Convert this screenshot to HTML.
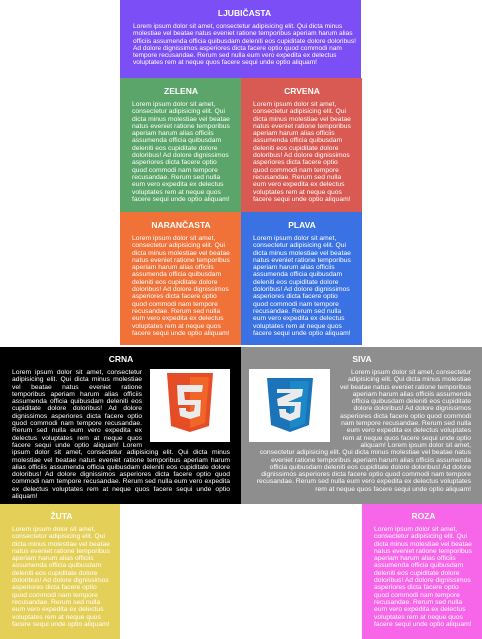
<!DOCTYPE html>
<html><head><meta charset="utf-8"><style>
*{margin:0;padding:0;box-sizing:border-box}
body{width:482px;height:639px;position:relative;background:#fff;font-family:"Liberation Sans",Arial,sans-serif;overflow:hidden}
.b{position:absolute;color:#fff;padding:7px 11px 0 12px;font-size:6.75px;line-height:7.3px}
.b h2{font-size:8.5px;line-height:10px;text-align:center;font-weight:bold;margin-bottom:5px}
.b p{margin:0}
.img{background:#fff;width:81px;height:73px;display:flex;align-items:center;justify-content:center}
</style></head><body>
<div class="b" style="left:120px;top:0;width:241px;height:78px;background:#7b4ff5;padding:8px 5px 0 13px;font-size:6.6px"><h2>LJUBIČASTA</h2><p>Lorem ipsum dolor sit amet, consectetur adipisicing elit. Qui dicta minus molestiae vel beatae natus eveniet ratione temporibus aperiam harum alias officiis assumenda officia quibusdam deleniti eos cupiditate dolore doloribus! Ad dolore dignissimos asperiores dicta facere optio quod commodi nam tempore recusandae. Rerum sed nulla eum vero expedita ex delectus voluptates rem at neque quos facere sequi unde optio aliquam!</p></div>
<div class="b" style="left:120px;top:78px;width:121px;height:134px;background:#5ba56a;padding-top:8px"><h2>ZELENA</h2><p>Lorem ipsum dolor sit amet, consectetur adipisicing elit. Qui dicta minus molestiae vel beatae natus eveniet ratione temporibus aperiam harum alias officiis assumenda officia quibusdam deleniti eos cupiditate dolore doloribus! Ad dolore dignissimos asperiores dicta facere optio quod commodi nam tempore recusandae. Rerum sed nulla eum vero expedita ex delectus voluptates rem at neque quos facere sequi unde optio aliquam!</p></div>
<div class="b" style="left:241px;top:78px;width:121px;height:134px;background:#d95a52;padding-top:8px"><h2>CRVENA</h2><p>Lorem ipsum dolor sit amet, consectetur adipisicing elit. Qui dicta minus molestiae vel beatae natus eveniet ratione temporibus aperiam harum alias officiis assumenda officia quibusdam deleniti eos cupiditate dolore doloribus! Ad dolore dignissimos asperiores dicta facere optio quod commodi nam tempore recusandae. Rerum sed nulla eum vero expedita ex delectus voluptates rem at neque quos facere sequi unde optio aliquam!</p></div>
<div class="b" style="left:120px;top:212px;width:121px;height:133px;background:#f07238;padding-top:8px"><h2>NARANČASTA</h2><p>Lorem ipsum dolor sit amet, consectetur adipisicing elit. Qui dicta minus molestiae vel beatae natus eveniet ratione temporibus aperiam harum alias officiis assumenda officia quibusdam deleniti eos cupiditate dolore doloribus! Ad dolore dignissimos asperiores dicta facere optio quod commodi nam tempore recusandae. Rerum sed nulla eum vero expedita ex delectus voluptates rem at neque quos facere sequi unde optio aliquam!</p></div>
<div class="b" style="left:241px;top:212px;width:121px;height:133px;background:#3a72e3;padding-top:8px"><h2>PLAVA</h2><p>Lorem ipsum dolor sit amet, consectetur adipisicing elit. Qui dicta minus molestiae vel beatae natus eveniet ratione temporibus aperiam harum alias officiis assumenda officia quibusdam deleniti eos cupiditate dolore doloribus! Ad dolore dignissimos asperiores dicta facere optio quod commodi nam tempore recusandae. Rerum sed nulla eum vero expedita ex delectus voluptates rem at neque quos facere sequi unde optio aliquam!</p></div>
<div class="b" style="left:0;top:347px;width:241px;height:157px;background:#000;padding-top:7px"><h2>CRNA</h2>
<div class="img" style="float:right;margin:0 0 2px 8px;width:80px;height:73px"><svg width="46" height="66" viewBox="0 0 46 66"><path d="M0 0h46l-4 53-19 6-19-6z" fill="#e44d26"/><path d="M23 4v51l15-5 4-46z" fill="#f16529"/><path d="M10 12h26l-1 7H17l1 8h16l-1 16-10 3-10-3-1-8h7l0 3 4 1 4-1 1-6H11z" fill="#ebebeb"/></svg></div>
<p style="text-align:justify">Lorem ipsum dolor sit amet, consectetur adipisicing elit. Qui dicta minus molestiae vel beatae natus eveniet ratione temporibus aperiam harum alias officiis assumenda officia quibusdam deleniti eos cupiditate dolore doloribus! Ad dolore dignissimos asperiores dicta facere optio quod commodi nam tempore recusandae. Rerum sed nulla eum vero expedita ex delectus voluptates rem at neque quos facere sequi unde optio aliquam! Lorem ipsum dolor sit amet, consectetur adipisicing elit. Qui dicta minus molestiae vel beatae natus eveniet ratione temporibus aperiam harum alias officiis assumenda officia quibusdam deleniti eos cupiditate dolore doloribus! Ad dolore dignissimos asperiores dicta facere optio quod commodi nam tempore recusandae. Rerum sed nulla eum vero expedita ex delectus voluptates rem at neque quos facere sequi unde optio aliquam!</p></div>
<div class="b" style="left:241px;top:347px;width:241px;height:157px;background:#8e8e8e;padding-top:7px"><h2>SIVA</h2>
<div class="img" style="float:left;margin:0 8px 2px -4px;width:81px;height:73px"><svg width="46" height="56" viewBox="0 0 46 56"><path d="M0 0h46l-4 47-19 7-19-7z" fill="#1b73ba"/><path d="M23 3v48l15-5 4-43z" fill="#1c88c7"/><path d="M10 11h26l-1 7-14 6h13l-1 15-10 4-10-4-1-8h7l0 3 4 2 4-2 1-6H11l-1-7 14-6H10z" fill="#ebebeb"/></svg></div>
<p style="text-align:right">Lorem ipsum dolor sit amet, consectetur adipisicing elit. Qui dicta minus molestiae vel beatae natus eveniet ratione temporibus aperiam harum alias officiis assumenda officia quibusdam deleniti eos cupiditate dolore doloribus! Ad dolore dignissimos asperiores dicta facere optio quod commodi nam tempore recusandae. Rerum sed nulla eum vero expedita ex delectus voluptates rem at neque quos facere sequi unde optio aliquam! Lorem ipsum dolor sit amet, consectetur adipisicing elit. Qui dicta minus molestiae vel beatae natus eveniet ratione temporibus aperiam harum alias officiis assumenda officia quibusdam deleniti eos cupiditate dolore doloribus! Ad dolore dignissimos asperiores dicta facere optio quod commodi nam tempore recusandae. Rerum sed nulla eum vero expedita ex delectus voluptates rem at neque quos facere sequi unde optio aliquam!</p></div>
<div class="b" style="left:0;top:504px;width:120px;height:135px;background:#e4d058;padding:7px 9px 0 12px"><h2>ŽUTA</h2><p>Lorem ipsum dolor sit amet, consectetur adipisicing elit. Qui dicta minus molestiae vel beatae natus eveniet ratione temporibus aperiam harum alias officiis assumenda officia quibusdam deleniti eos cupiditate dolore doloribus! Ad dolore dignissimos asperiores dicta facere optio quod commodi nam tempore recusandae. Rerum sed nulla eum vero expedita ex delectus voluptates rem at neque quos facere sequi unde optio aliquam!</p></div>
<div class="b" style="left:362px;top:504px;width:120px;height:135px;background:#f766e8;padding:7px 9px 0 12px"><h2>ROZA</h2><p>Lorem ipsum dolor sit amet, consectetur adipisicing elit. Qui dicta minus molestiae vel beatae natus eveniet ratione temporibus aperiam harum alias officiis assumenda officia quibusdam deleniti eos cupiditate dolore doloribus! Ad dolore dignissimos asperiores dicta facere optio quod commodi nam tempore recusandae. Rerum sed nulla eum vero expedita ex delectus voluptates rem at neque quos facere sequi unde optio aliquam!</p></div>
</body></html>
